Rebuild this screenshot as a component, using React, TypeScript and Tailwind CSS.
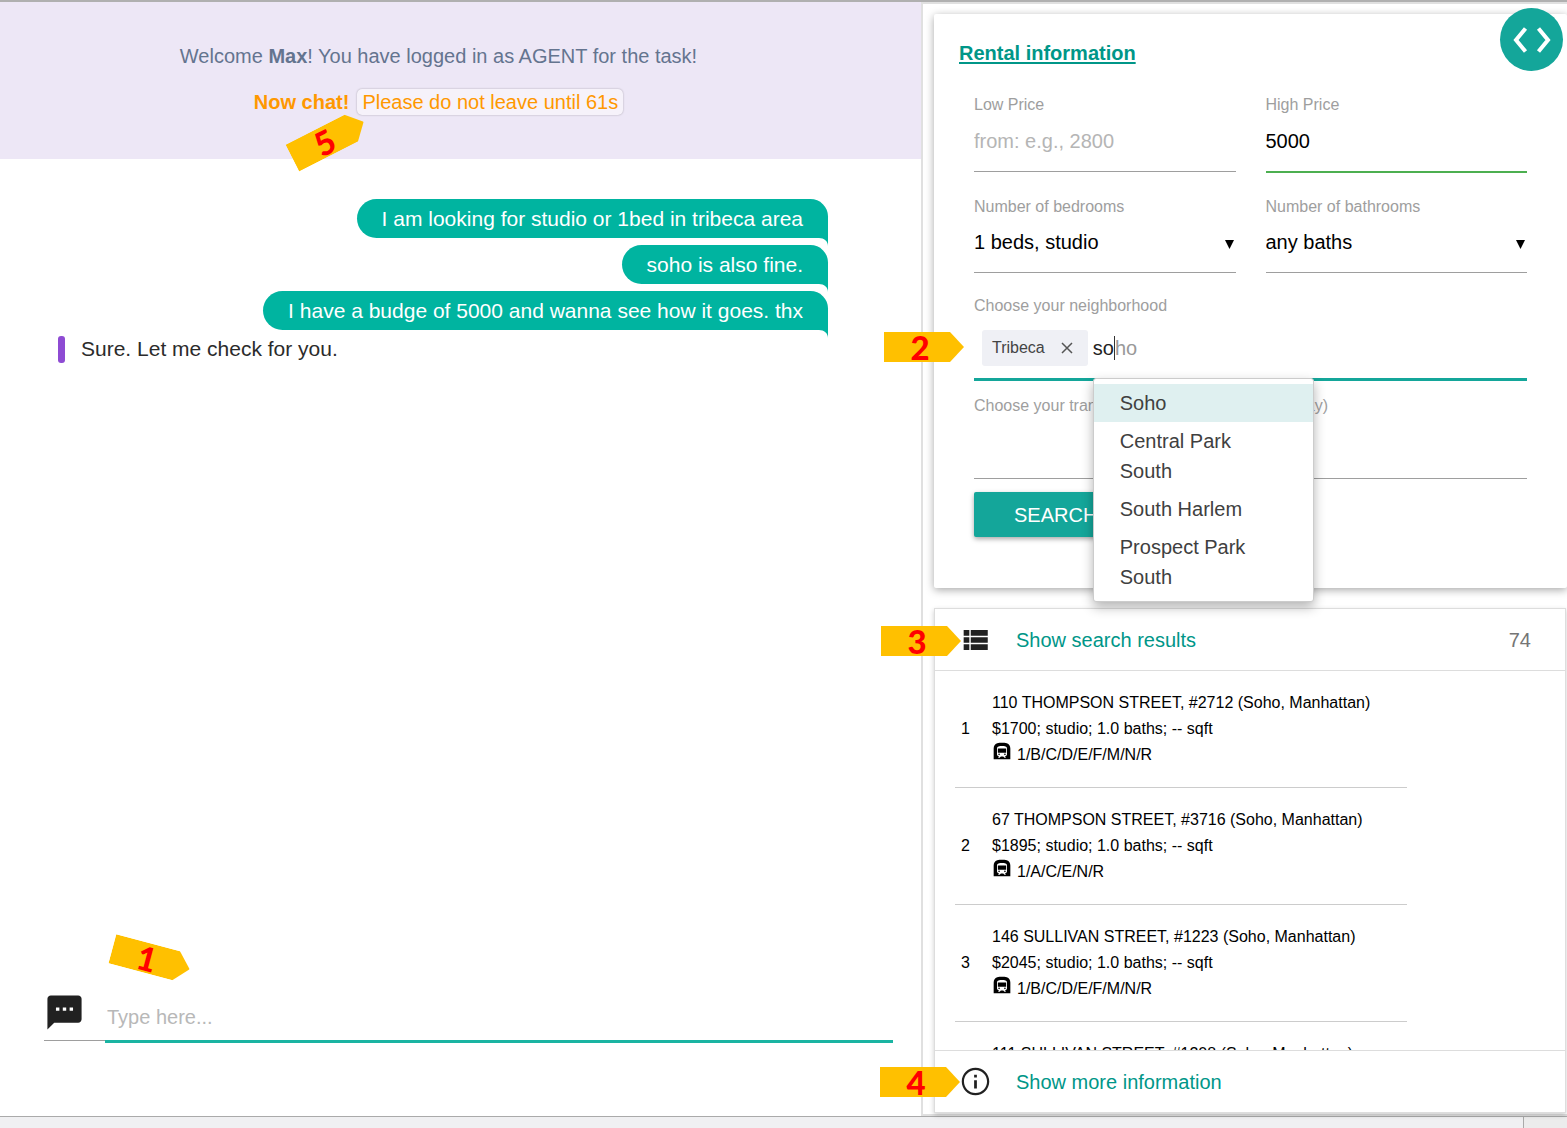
import React, { useState } from "react";
import { MdSms, MdSubway } from "react-icons/md";

const messages = [
  "I am looking for studio or 1bed in tribeca area",
  "soho is also fine.",
  "I have a budge of 5000 and wanna see how it goes. thx",
];

const suggestions = ["Soho", "Central Park South", "South Harlem", "Prospect Park South"];

type Listing = { address: string; details?: string; lines?: string };

const listings: Listing[] = [
  { address: "110 THOMPSON STREET, #2712 (Soho, Manhattan)", details: "$1700; studio; 1.0 baths; -- sqft", lines: "1/B/C/D/E/F/M/N/R" },
  { address: "67 THOMPSON STREET, #3716 (Soho, Manhattan)", details: "$1895; studio; 1.0 baths; -- sqft", lines: "1/A/C/E/N/R" },
  { address: "146 SULLIVAN STREET, #1223 (Soho, Manhattan)", details: "$2045; studio; 1.0 baths; -- sqft", lines: "1/B/C/D/E/F/M/N/R" },
  { address: "111 SULLIVAN STREET, #1208 (Soho, Manhattan)" },
];

function Marker({ label, className }: { label: string; className: string }) {
  return (
    <div className={`absolute z-20 flex h-[30px] w-20 items-center justify-center ${className}`}>
      <svg className="absolute inset-0" width="80" height="30" viewBox="0 0 80 30" aria-hidden="true">
        <path d="M0 0H66L80 15L66 30H0Z" fill="#ffc000" />
      </svg>
      <span className="relative pr-2 font-['Lato',sans-serif] text-[33px] leading-[30px] font-black text-[#ff0000]">{label}</span>
    </div>
  );
}

function Bubble({ text }: { text: string }) {
  return (
    <li className="relative rounded-l-[20px] rounded-tr-[18px] bg-[#00b4a0] px-[25px] text-[21px] leading-[39px] text-white">
      {text}
      <svg className="absolute top-full right-0" width="9" height="8" viewBox="0 0 9 8" aria-hidden="true">
        <path d="M0 0C5 0 9 3 9 8V0Z" fill="#00b4a0" />
      </svg>
    </li>
  );
}

function SelectField({ id, label, options }: { id: string; label: string; options: string[] }) {
  return (
    <div className="border-b border-[#9e9e9e] pb-[14px]">
      <label htmlFor={id} className="block text-base leading-6 text-[#9e9e9e]">{label}</label>
      <div className="relative mt-[7px] flex items-center">
        <select id={id} className="h-8 w-full appearance-none bg-transparent text-xl text-black outline-none">
          {options.map((o) => (
            <option key={o}>{o}</option>
          ))}
        </select>
        <svg className="pointer-events-none absolute right-[2px] mt-1" width="9" height="10" viewBox="0 0 9 10" aria-hidden="true">
          <path d="M0 1H9L4.500 10Z" fill="#000" />
        </svg>
      </div>
    </div>
  );
}

function ChatPane() {
  const [draft, setDraft] = useState("");
  return (
    <section className="flex min-h-0 flex-col">
      <header className="relative flex h-[157px] shrink-0 flex-col items-center bg-[#ede7f6] pt-[38px] pr-11 text-xl leading-8">
        <p className="text-[#64748f]">
          Welcome <b>Max</b>! You have logged in as AGENT for the task!
        </p>
        <p className="mt-[17px] flex items-center gap-2 leading-[26px] text-[#ff9800]">
          <b>Now chat!</b>
          <span className="rounded-[5px] bg-[#f6f2fa] px-[5px] shadow-[0_0_2px_rgba(0,0,0,0.3)]">Please do not leave until 61s</span>
        </p>
        <Marker label="5" className="top-[123px] left-[288px] -rotate-[27deg]" />
      </header>

      <div className="min-h-0 flex-1 pt-10 pr-[93px] pl-[58px]">
        <ul className="flex flex-col items-end gap-[7px]">
          {messages.map((m) => (
            <Bubble key={m} text={m} />
          ))}
        </ul>
        <p className="mt-1 flex items-center gap-4 text-[21px] leading-[30px] text-[#2b2b2b]">
          <span className="h-[27px] w-[7px] rounded-[3px] bg-[#8e4bd3]" />
          Sure. Let me check for you.
        </p>
      </div>

      <form className="relative mr-7 mb-[73px] ml-11 flex shrink-0 items-start" onSubmit={(e) => e.preventDefault()}>
        <Marker label="1" className="-top-12 left-[67px] rotate-[15deg]" />
        <label htmlFor="message" className="h-[49px] w-[61px] border-b border-[#9e9e9e]">
          <MdSms className="size-[41px] text-[#212121]" />
        </label>
        <input
          id="message"
          aria-label="Message"
          value={draft}
          onChange={(e) => setDraft(e.target.value)}
          placeholder="Type here..."
          className="h-[51px] min-w-0 flex-1 border-b-[3px] border-[#1ab4a2] px-[2px] pt-[2px] text-xl text-black outline-none placeholder:text-[#b8b8b8]"
        />
      </form>
    </section>
  );
}

function SearchCard() {
  const [low, setLow] = useState("");
  const [high, setHigh] = useState("5000");
  const [query, setQuery] = useState("so");
  return (
    <section className="relative shrink-0 rounded-[2px] bg-white pt-6 pr-10 pb-[51px] pl-10 shadow-[0_2px_8px_rgba(0,0,0,0.35)]">
      <h2 className="-ml-[15px] text-xl leading-[30px] font-bold text-[#009688] underline decoration-2 underline-offset-2">Rental information</h2>
      <button type="button" aria-label="Toggle code view" className="absolute -top-[6px] right-1 flex size-[63px] items-center justify-center rounded-full bg-[#14a69a]">
        <svg width="38" height="26" viewBox="0 0 38 26" fill="none" stroke="#fff" strokeWidth="4" aria-hidden="true">
          <path d="M12.500 1.500L3 13L12.500 24.500M25.500 1.500L35 13L25.500 24.500" />
        </svg>
      </button>

      <form onSubmit={(e) => e.preventDefault()}>
        <div className="mt-[25px] grid grid-cols-2 gap-x-[30px]">
          <div>
            <label htmlFor="low" className="block text-base leading-6 text-[#9e9e9e]">Low Price</label>
            <input id="low" value={low} onChange={(e) => setLow(e.target.value)} placeholder="from: e.g., 2800"
              className="mt-px h-[54px] w-full border-b border-[#9e9e9e] pb-[6px] text-xl text-black outline-none placeholder:text-[#b5b5b5]" />
          </div>
          <div>
            <label htmlFor="high" className="block text-base leading-6 text-[#9e9e9e]">High Price</label>
            <input id="high" value={high} onChange={(e) => setHigh(e.target.value)}
              className="mt-px h-[55px] w-full border-b-2 border-[#4caf50] pb-[6px] text-xl text-black outline-none" />
          </div>
        </div>

        <div className="mt-[22px] grid grid-cols-2 gap-x-[30px]">
          <SelectField id="beds" label="Number of bedrooms" options={["1 beds, studio"]} />
          <SelectField id="baths" label="Number of bathrooms" options={["any baths"]} />
        </div>

        <label htmlFor="area" className="mt-[21px] block text-base leading-6 text-[#9e9e9e]">Choose your neighborhood</label>
        <div className="relative flex items-center border-b-[3px] border-[#14a69a] pt-3 pb-3 pl-2">
          <Marker label="2" className="top-[14px] -left-[90px]" />
          <span className="flex h-9 items-center gap-4 rounded-[3px] bg-[#eff0f5] px-[10px] text-base text-[#444]">
            Tribeca
            <button type="button" aria-label="Remove Tribeca" className="pr-[5px]">
              <svg width="12" height="12" viewBox="0 0 12 12" stroke="#555" strokeWidth="1.500" aria-hidden="true">
                <path d="M1 1L11 11M11 1L1 11" />
              </svg>
            </button>
          </span>
          <div className="relative ml-[5px] flex-1 text-xl leading-[30px]">
            <span className="pointer-events-none absolute inset-0 flex items-center text-[#999]" aria-hidden="true">
              <span className="invisible">so</span>
              <span className="border-l border-[#333] leading-6">ho</span>
            </span>
            <input id="area" value={query} onChange={(e) => setQuery(e.target.value)} className="relative block w-full bg-transparent text-[#222] outline-none" />
            <ul role="listbox" aria-label="Neighborhood suggestions"
              className="absolute top-[45px] left-0 z-10 w-[221px] rounded-[3px] border border-[#ccc] bg-white py-[5px] shadow-[0_5px_12px_rgba(0,0,0,0.3)]">
              {suggestions.map((s, i) => (
                <li key={s} role="option" aria-selected={i === 0} className="py-1 pr-12 pl-[26px] text-xl leading-[30px] text-[#404040] aria-selected:bg-[#dff0f0]">
                  {s}
                </li>
              ))}
            </ul>
          </div>
        </div>

        <label htmlFor="transit" className="mt-[13px] block text-base leading-6 text-[#9e9e9e]">Choose your transportation line (e.g., the subway)</label>
        <input id="transit" className="h-[61px] w-full border-b border-[#9e9e9e] text-xl outline-none" />

        <button type="submit" className="mt-[13px] h-[45px] rounded-[2px] bg-[#14a69a] px-10 text-xl text-white shadow-[0_2px_5px_rgba(0,0,0,0.35)]">SEARCH</button>
      </form>
    </section>
  );
}

function ResultsCard() {
  return (
    <section className="relative mt-5 mr-px flex min-h-0 flex-1 flex-col border border-[#ddd] bg-white shadow-[0_2px_5px_rgba(0,0,0,0.2)]">
      <Marker label="3" className="top-[17px] -left-[54px]" />
      <Marker label="4" className="bottom-[15px] -left-[55px]" />
      <button type="button" className="flex h-[62px] shrink-0 items-center border-b border-[#ddd] pr-[34px] pl-[23px] text-xl">
        <svg width="34" height="34" viewBox="0 0 24 24" fill="#212121" aria-hidden="true">
          <path d="M4 14h4v-4H4v4zm0 5h4v-4H4v4zM4 9h4V5H4v4zm5 5h12v-4H9v4zm0 5h12v-4H9v4zM9 5v4h12V5H9z" />
        </svg>
        <span className="ml-6 flex-1 text-left text-[#009688]">Show search results</span>
        <span className="text-[#757575]">74</span>
      </button>

      <ol className="mr-[158px] ml-5 min-h-0 flex-1 overflow-hidden text-base text-black">
        {listings.map((l, i) => (
          <li key={l.address} className="flex h-[117px] items-start border-b border-[#ccc] pt-[19px] pl-[6px] leading-[26px]">
            <span className="w-[31px] pt-[26px]">{l.details && i + 1}</span>
            <div>
              <p>{l.address}</p>
              {l.details && <p>{l.details}</p>}
              {l.lines && (
                <p className="flex h-[26px] items-end">
                  <MdSubway className="mb-[7px] size-5" />
                  <span className="ml-[5px]">{l.lines}</span>
                </p>
              )}
            </div>
          </li>
        ))}
      </ol>

      <button type="button" className="flex h-[62px] shrink-0 items-center border-t border-[#ddd] pl-6 text-xl">
        <svg width="33" height="33" viewBox="0 0 24 24" fill="#212121" aria-hidden="true">
          <path d="M11 17h2v-6h-2v6zm1-15C6.480 2 2 6.480 2 12s4.480 10 10 10 10-4.480 10-10S17.520 2 12 2zm0 18.400c-4.640 0-8.400-3.760-8.400-8.400S7.360 3.600 12 3.600s8.400 3.760 8.400 8.400-3.760 8.400-8.400 8.400zM11 9h2V7h-2v2z" />
        </svg>
        <span className="ml-6 text-[#009688]">Show more information</span>
      </button>
    </section>
  );
}

export default function App() {
  return (
    <div className="flex h-screen flex-col border-t-2 border-[#b0b0b0] bg-white font-['Liberation_Sans',Arial,sans-serif]">
      <main className="grid min-h-0 flex-1 grid-cols-[921fr_646fr] grid-rows-[minmax(0,1fr)]">
        <ChatPane />
        <aside className="flex min-h-0 flex-col border-t-2 border-b-2 border-l-2 border-[#e0e0e0] bg-white pt-[10px] pb-px pl-[11px]">
          <SearchCard />
          <ResultsCard />
        </aside>
      </main>
      <footer className="flex h-3 shrink-0 border-t border-[#aaa] bg-[#f0f0f2]">
        <span className="ml-auto w-11 border-l border-[#aaa] bg-[#ececec]" />
      </footer>
    </div>
  );
}
